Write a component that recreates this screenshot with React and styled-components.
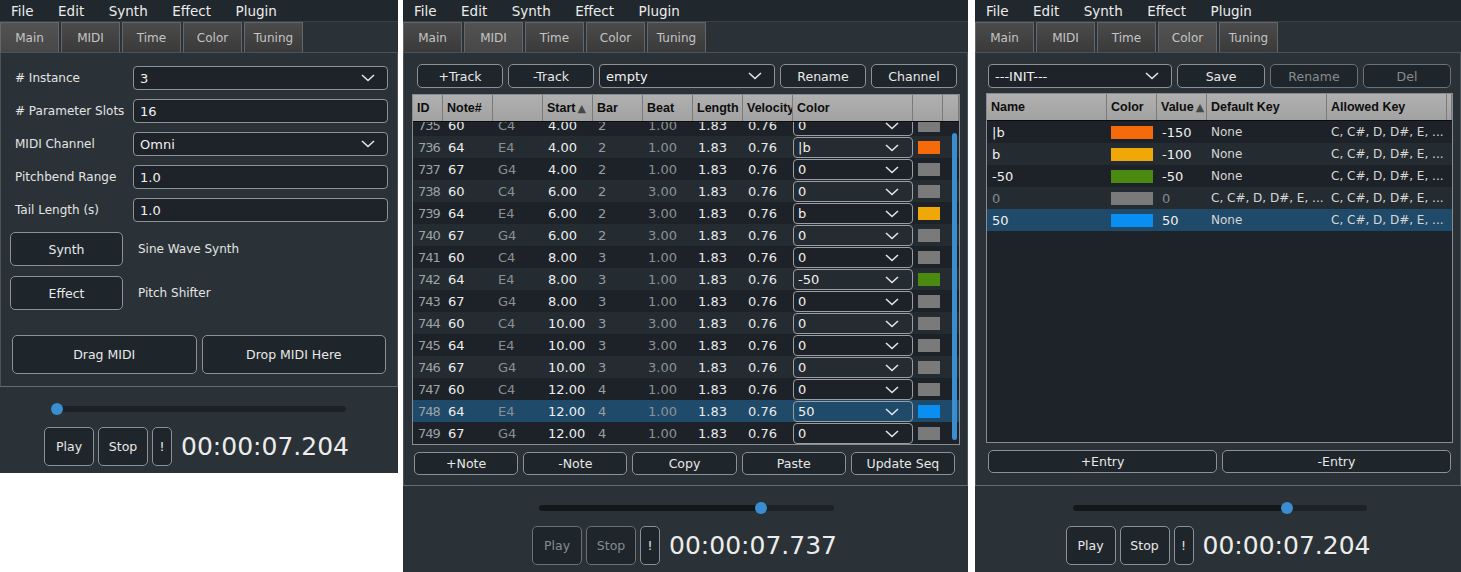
import React, { useLayoutEffect, useRef } from "react";
import styled, { createGlobalStyle } from "styled-components";

const GlobalStyle = createGlobalStyle`
  html, body {
    margin: 0;
    padding: 0;
    background: #ffffff;
  }
  body {
    font-family: "DejaVu Sans", Verdana, sans-serif;
  }
  * {
    box-sizing: border-box;
  }
`;

const Page = styled.div`
  display: flex;
  align-items: flex-start;
  width: 1461px;
  height: 572px;
  overflow: hidden;
`;

const Panel = styled.div`
  display: flex;
  flex-direction: column;
  flex: none;
  width: ${(p) => p.$w}px;
  height: ${(p) => p.$h}px;
  margin-left: ${(p) => p.$gap || 0}px;
  background: #2a3237;
  color: #e6e6e6;
  font-size: 12px;
`;

const MenuBar = styled.div`
  display: flex;
  align-items: center;
  gap: 24.5px;
  height: 22px;
  padding-left: 11px;
  background: #21282d;
  border-bottom: 1px solid #3a4146;
  font-size: 13.5px;
  color: #ececec;
`;

const TabBar = styled.div`
  display: flex;
  align-items: flex-end;
  gap: 2px;
  height: 30px;
  background: #2a3237;
`;

const Tab = styled.div`
  display: flex;
  align-items: center;
  justify-content: center;
  width: 59px;
  height: 30px;
  border: 1px solid #63676a;
  border-bottom: none;
  background: ${(p) =>
    p.$active
      ? "linear-gradient(#535353, #474747)"
      : "linear-gradient(#4b4b4b, #3a3a3a)"};
  color: #c4c4c4;
  font-size: 12px;
`;

const Content = styled.div`
  display: flex;
  flex-direction: column;
  flex: 1;
  min-height: 0;
  border: 1px solid #4d5459;
  border-bottom: none;
  padding: ${(p) => p.$pad};
`;

/* ---------- shared controls ---------- */

const Btn = styled.button`
  display: flex;
  align-items: center;
  justify-content: center;
  flex: ${(p) => (p.$w ? "none" : 1)};
  width: ${(p) => (p.$w ? `${p.$w}px` : "auto")};
  height: ${(p) => p.$h || 24}px;
  padding: 0;
  background: #1f262b;
  border: 1px solid ${(p) => (p.$muted ? "#6b7175" : "#8b9196")};
  border-radius: 5px;
  color: ${(p) => (p.$muted ? "#868b90" : "#e8e8e8")};
  font-family: inherit;
  font-size: 12.5px;
`;

const Field = styled.div`
  display: flex;
  align-items: center;
  justify-content: space-between;
  flex: ${(p) => (p.$w ? "none" : 1)};
  width: ${(p) => (p.$w ? `${p.$w}px` : "auto")};
  height: ${(p) => p.$h || 24}px;
  padding: 0 12px 0 6px;
  background: #1d2328;
  border: 1px solid #8d9296;
  border-radius: 4px;
  color: #f0f0f0;
  font-size: 13px;
`;

const Chevron = () => (
  <svg width="14" height="8" viewBox="0 0 14 8">
    <polyline
      points="1,1 7,6.5 13,1"
      fill="none"
      stroke="#e4e4e4"
      strokeWidth="1.6"
    />
  </svg>
);

const Select = ({ value, w, h }) => (
  <Field $w={w} $h={h}>
    <span>{value}</span>
    <Chevron />
  </Field>
);

const ToolRow = styled.div`
  display: flex;
  gap: 5px;
  margin: ${(p) => p.$m || "0"};
`;

/* ---------- transport ---------- */

const TransportBar = styled.div`
  display: flex;
  justify-content: center;
  flex: none;
  height: 87px;
  padding-top: 16px;
  border-top: 1px solid #656b70;
  background: #2a3237;
`;

const TransportGroup = styled.div`
  display: flex;
  flex-direction: column;
  gap: 12px;
  margin-right: ${(p) => p.$shift || 0}px;
`;

const SliderTrack = styled.div`
  position: relative;
  height: 12px;
  margin: 0 3px 0 7px;

  &::before {
    content: "";
    position: absolute;
    left: 0;
    right: 0;
    top: 3px;
    height: 6px;
    border-radius: 3px;
    background: linear-gradient(
      90deg,
      #12171a ${(p) => p.$pos}%,
      #1b2125 ${(p) => p.$pos}%
    );
  }
`;

const SliderThumb = styled.div`
  position: absolute;
  top: 0;
  left: calc(${(p) => p.$pos}% - 6px);
  width: 12px;
  height: 12px;
  border-radius: 50%;
  background: #3a8dd0;
`;

const TransportRow = styled.div`
  display: flex;
  align-items: center;
  gap: 4px;
`;

const TimeText = styled.div`
  margin-left: 5px;
  font-size: 25px;
  color: #ececec;
  line-height: 39px;
`;

const Transport = ({ pos, time, muted, shift }) => (
  <TransportBar>
    <TransportGroup $shift={shift}>
      <SliderTrack $pos={pos}>
        <SliderThumb $pos={pos} />
      </SliderTrack>
      <TransportRow>
        <Btn $w={50} $h={39} $muted={muted}>
          Play
        </Btn>
        <Btn $w={50} $h={39} $muted={muted}>
          Stop
        </Btn>
        <Btn $w={20} $h={39}>
          !
        </Btn>
        <TimeText>{time}</TimeText>
      </TransportRow>
    </TransportGroup>
  </TransportBar>
);

const Header = ({ active }) => (
  <>
    <MenuBar>
      <span>File</span>
      <span>Edit</span>
      <span>Synth</span>
      <span>Effect</span>
      <span>Plugin</span>
    </MenuBar>
    <TabBar>
      {["Main", "MIDI", "Time", "Color", "Tuning"].map((t) => (
        <Tab key={t} $active={t === active}>
          {t}
        </Tab>
      ))}
    </TabBar>
  </>
);

/* ---------- main tab ---------- */

const FormGrid = styled.div`
  display: grid;
  grid-template-columns: 123px 1fr;
  row-gap: 9px;
  align-items: center;
`;

const Label = styled.div`
  padding-left: 5px;
  font-size: 12px;
  color: #e4e4e4;
`;

const PluginRow = styled.div`
  display: flex;
  align-items: center;
  gap: 15px;
  margin-top: ${(p) => p.$mt}px;
`;

const PluginName = styled.span`
  font-size: 12px;
  color: #e4e4e4;
`;

const MainPanel = () => (
  <Panel $w={398} $h={473}>
    <Header active="Main" />
    <Content $pad="13px 9px 0 9px">
      <FormGrid>
        <Label># Instance</Label>
        <Select value="3" />
        <Label># Parameter Slots</Label>
        <Field>16</Field>
        <Label>MIDI Channel</Label>
        <Select value="Omni" />
        <Label>Pitchbend Range</Label>
        <Field>1.0</Field>
        <Label>Tail Length (s)</Label>
        <Field>1.0</Field>
      </FormGrid>
      <PluginRow $mt={10}>
        <Btn $w={113} $h={34}>
          Synth
        </Btn>
        <PluginName>Sine Wave Synth</PluginName>
      </PluginRow>
      <PluginRow $mt={10}>
        <Btn $w={113} $h={34}>
          Effect
        </Btn>
        <PluginName>Pitch Shifter</PluginName>
      </PluginRow>
      <ToolRow $m="25px 2px 0 2px">
        <Btn $h={39}>Drag MIDI</Btn>
        <Btn $h={39}>Drop MIDI Here</Btn>
      </ToolRow>
    </Content>
    <Transport pos={2} time="00:00:07.204" shift={5} />
  </Panel>
);

/* ---------- tables ---------- */

const TableFrame = styled.div`
  position: relative;
  display: flex;
  flex-direction: column;
  flex: none;
  height: ${(p) => p.$h}px;
  margin-top: ${(p) => p.$mt}px;
  border: 1px solid #878c90;
  background: #1d2328;
  overflow: hidden;
`;

const HeadRow = styled.div`
  display: grid;
  grid-template-columns: ${(p) => p.$cols};
  flex: none;
  height: 27px;
  background: linear-gradient(#b0b0b0, #a2a2a2);
  border-bottom: 1px solid #0c0c0c;
`;

const HeadCell = styled.div`
  display: flex;
  align-items: center;
  padding-left: 4px;
  border-right: 1px solid #7a7a7a;
  color: #0e0e0e;
  font-family: "Liberation Sans", Arial, sans-serif;
  font-weight: bold;
  font-size: 12.5px;
  white-space: nowrap;
  overflow: hidden;
`;

const SortArrow = styled.span`
  margin-left: 2px;
  font-family: "DejaVu Sans", sans-serif;
  font-size: 11px;
  color: #474747;
`;

const Body = styled.div`
  flex: 1;
  min-height: 0;
  overflow: hidden;
`;

const Row = styled.div`
  display: grid;
  grid-template-columns: ${(p) => p.$cols};
  height: 22px;
  background: ${(p) => (p.$sel ? "#1f4a69" : p.$alt ? "#242c32" : "#1c2227")};
`;

const Cell = styled.div`
  display: flex;
  align-items: center;
  padding-left: ${(p) => (p.$size ? 4 : 5)}px;
  color: ${(p) => p.$tone || "#e8e8e8"};
  font-size: ${(p) => p.$size || 13}px;
  font-weight: normal;
  letter-spacing: ${(p) => (p.$tight ? "-1px" : "0")};
  white-space: nowrap;
  overflow: hidden;
`;

const ComboCell = styled.div`
  display: flex;
  padding-top: 1px;
`;

const Combo = styled.div`
  display: flex;
  align-items: center;
  justify-content: space-between;
  flex: 1;
  height: 21px;
  padding: 0 13px 0 4px;
  border: 1px solid #9a9ea2;
  border-radius: 4px;
  color: #f0f0f0;
  font-size: 13px;
`;

const SwatchCell = styled.div`
  display: flex;
  align-items: center;
  padding-left: ${(p) => p.$pl}px;
`;

const Swatch = styled.div`
  width: ${(p) => p.$w}px;
  height: 13px;
  background: ${(p) => p.$c};
`;

const ScrollBar = styled.div`
  position: absolute;
  top: 38px;
  bottom: 4px;
  right: 2px;
  width: 5px;
  border-radius: 3px;
  background: #3a8dd0;
`;

const SWATCH = {
  "|b": "#f56a0a",
  b: "#f0a808",
  "-50": "#4b8a10",
  "0": "#7a7a7a",
  "50": "#0a8ef2",
};

/* ---------- midi tab ---------- */

const MIDI_COLS = "30px 50px 50px 50px 50px 50px 50px 50px 120px 30px 1fr";

const notes = [60, 64, 67];
const names = ["C4", "E4", "G4"];
const midiColors = {
  736: "|b",
  739: "b",
  742: "-50",
  748: "50",
};

const midiRows = Array.from({ length: 15 }, (_, i) => {
  const id = 735 + i;
  const k = i % 3;
  const start = 4 + 2 * Math.floor(i / 3);
  return {
    id,
    note: notes[k],
    name: names[k],
    start: start.toFixed(2),
    bar: Math.floor(start / 4) + 1,
    beat: start % 4 === 0 ? "1.00" : "3.00",
    color: midiColors[id] || "0",
  };
});

const MidiTable = () => {
  const body = useRef(null);
  useLayoutEffect(() => {
    body.current.scrollTop = 8;
  }, []);
  return (
    <TableFrame $h={351} $mt={6}>
      <HeadRow $cols={MIDI_COLS}>
        <HeadCell>ID</HeadCell>
        <HeadCell>Note#</HeadCell>
        <HeadCell />
        <HeadCell>
          Start<SortArrow>▲</SortArrow>
        </HeadCell>
        <HeadCell>Bar</HeadCell>
        <HeadCell>Beat</HeadCell>
        <HeadCell>Length</HeadCell>
        <HeadCell>Velocity</HeadCell>
        <HeadCell>Color</HeadCell>
        <HeadCell />
        <HeadCell />
      </HeadRow>
      <Body ref={body}>
        {midiRows.map((r, i) => (
          <Row key={r.id} $cols={MIDI_COLS} $alt={i % 2 === 1} $sel={r.id === 748}>
            <Cell $tone="#9ca1a5" $tight>
              {r.id}
            </Cell>
            <Cell $tone="#eeeeee">{r.note}</Cell>
            <Cell $tone="#8b9095">{r.name}</Cell>
            <Cell $tone="#eeeeee">{r.start}</Cell>
            <Cell $tone="#9a9ea2">{r.bar}</Cell>
            <Cell $tone="#8d9296">{r.beat}</Cell>
            <Cell>1.83</Cell>
            <Cell>0.76</Cell>
            <ComboCell>
              <Combo>
                <span>{r.color}</span>
                <Chevron />
              </Combo>
            </ComboCell>
            <SwatchCell $pl={5}>
              <Swatch $w={22} $c={SWATCH[r.color]} />
            </SwatchCell>
            <div />
          </Row>
        ))}
      </Body>
      <ScrollBar />
    </TableFrame>
  );
};

const MidiPanel = () => (
  <Panel $w={565} $h={572} $gap={5}>
    <Header active="MIDI" />
    <Content $pad="11px 7px 0 8px">
      <ToolRow $m="0 3px 0 5px">
        <Btn $w={86}>+Track</Btn>
        <Btn $w={86}>-Track</Btn>
        <Select value="empty" w={176} />
        <Btn $w={86}>Rename</Btn>
        <Btn $w={86}>Channel</Btn>
      </ToolRow>
      <MidiTable />
      <ToolRow $m="7px 5px 0 2px">
        <Btn $h={23}>+Note</Btn>
        <Btn $h={23}>-Note</Btn>
        <Btn $h={23}>Copy</Btn>
        <Btn $h={23}>Paste</Btn>
        <Btn $h={23}>Update Seq</Btn>
      </ToolRow>
    </Content>
    <Transport pos={75.4} time="00:00:07.737" muted shift={2} />
  </Panel>
);

/* ---------- color tab ---------- */

const COLOR_COLS = "120px 50px 50px 120px 120px 1fr";
const KEYS = "C, C#, D, D#, E, ...";

const colorRows = [
  { name: "|b", value: "-150", def: "None" },
  { name: "b", value: "-100", def: "None" },
  { name: "-50", value: "-50", def: "None" },
  { name: "0", value: "0", def: KEYS, dim: true },
  { name: "50", value: "50", def: "None", sel: true },
];

const ColorTable = () => (
  <TableFrame $h={350} $mt={5}>
    <HeadRow $cols={COLOR_COLS}>
      <HeadCell>Name</HeadCell>
      <HeadCell>Color</HeadCell>
      <HeadCell>
        Value<SortArrow>▲</SortArrow>
      </HeadCell>
      <HeadCell>Default Key</HeadCell>
      <HeadCell>Allowed Key</HeadCell>
      <HeadCell />
    </HeadRow>
    <Body>
      {colorRows.map((r, i) => (
        <Row key={r.name} $cols={COLOR_COLS} $alt={i % 2 === 1} $sel={r.sel}>
          <Cell $tone={r.dim ? "#858a8f" : "#f0f0f0"}>{r.name}</Cell>
          <SwatchCell $pl={4}>
            <Swatch $w={42} $c={SWATCH[r.name]} />
          </SwatchCell>
          <Cell $tone={r.dim ? "#858a8f" : "#f0f0f0"}>{r.value}</Cell>
          <Cell $tone="#d6d6d6" $size={12}>
            {r.def}
          </Cell>
          <Cell $tone="#d6d6d6" $size={12}>
            {KEYS}
          </Cell>
          <div />
        </Row>
      ))}
    </Body>
  </TableFrame>
);

const ColorPanel = () => (
  <Panel $w={486} $h={572} $gap={7}>
    <Header active="Color" />
    <Content $pad="11px 7px 0 10px">
      <ToolRow $m="0 2px">
        <Select value="---INIT---" w={184} />
        <Btn $w={88}>Save</Btn>
        <Btn $w={88} $muted>
          Rename
        </Btn>
        <Btn $w={88} $muted>
          Del
        </Btn>
      </ToolRow>
      <ColorTable />
      <ToolRow $m="7px 2px 0 2px">
        <Btn $h={23}>+Entry</Btn>
        <Btn $h={23}>-Entry</Btn>
      </ToolRow>
    </Content>
    <Transport pos={72.6} time="00:00:07.204" />
  </Panel>
);

export default function App() {
  return (
    <>
      <GlobalStyle />
      <Page>
        <MainPanel />
        <MidiPanel />
        <ColorPanel />
      </Page>
    </>
  );
}
